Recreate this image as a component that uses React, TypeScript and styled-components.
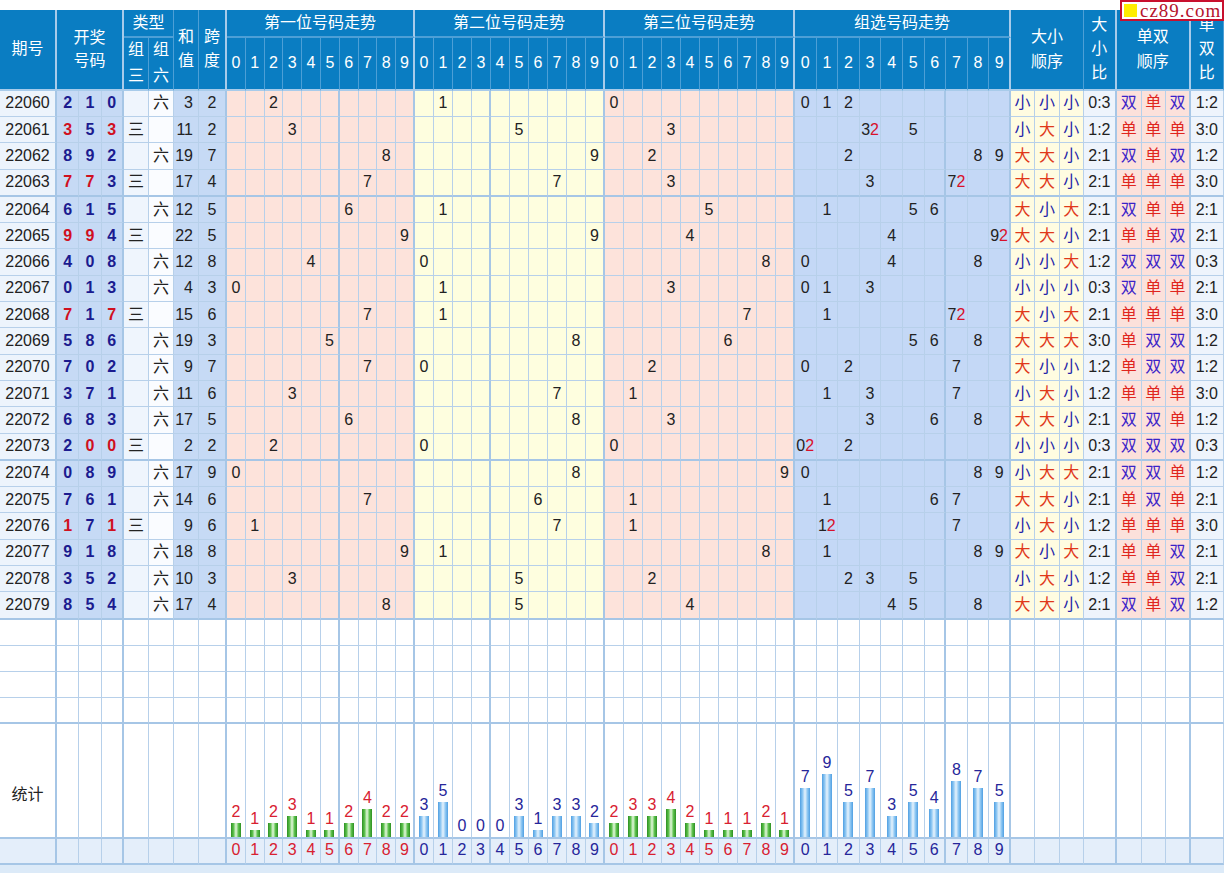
import React from 'react'
import styled, { createGlobalStyle } from 'styled-components'

const GlobalStyle = createGlobalStyle`
  html, body {
    margin: 0;
    padding: 0;
    background: #fff;
    overflow: hidden;
  }
  body {
    font-family: "Liberation Sans", "Noto Sans CJK SC", sans-serif;
    font-size: 16px;
    color: #222;
  }
`

const Page = styled.div`
  position: relative;
  width: 1224px;
  padding-top: 10px;
`

const Grid = styled.div<{ $cols: string; $rows: string }>`
  display: grid;
  grid-template-columns: ${p => p.$cols};
  grid-template-rows: ${p => p.$rows};
`

const Head = styled.div<{ $cs?: number; $rs?: number; $thick?: boolean; $top?: boolean; $lh?: number }>`
  box-sizing: border-box;
  grid-column: span ${p => p.$cs ?? 1};
  grid-row: span ${p => p.$rs ?? 1};
  background: #0a7dc2;
  color: #fff;
  display: flex;
  align-items: center;
  justify-content: center;
  text-align: center;
  font-size: 16px;
  line-height: ${p => p.$lh ?? 20}px;
  white-space: nowrap;
  border-right: ${p => (p.$thick ? '2px solid #a8cbea' : '1px solid #4d9fd6')};
  border-bottom: ${p => (p.$top ? '2px solid #4d9fd6' : '2px solid #a8cbea')};
`

const Cell = styled.div<{ $bg: string; $thick?: boolean; $bottom?: number }>`
  box-sizing: border-box;
  display: flex;
  align-items: center;
  justify-content: center;
  background: ${p => p.$bg};
  border-right: ${p => (p.$thick ? '2px solid #a6c6e6' : '1px solid #b7d0ea')};
  border-bottom: ${p => (p.$bottom === 2 ? '2px solid #a6c6e6' : '1px solid #b7d0ea')};
  font-size: 16px;
  line-height: 18px;
  color: #222;
  white-space: nowrap;
`

const SumCell = styled(Cell)`
  justify-content: flex-end;
  padding-right: 5px;
`

const StatCell = styled(Cell)`
  flex-direction: column;
  justify-content: flex-end;
`

const IssueStat = styled(Cell)`
  align-items: flex-end;
  padding-bottom: 33px;
`

const Ball = styled.span<{ $rep?: boolean }>`
  font-weight: bold;
  color: ${p => (p.$rep ? '#d0101f' : '#1b1b8f')};
`

const Red = styled.span`
  color: #d8102a;
`

const Word = styled.span<{ $hot: boolean }>`
  color: ${p => (p.$hot ? '#e0381a' : '#2424a8')};
`

const OddEven = styled.span<{ $odd: boolean }>`
  color: ${p => (p.$odd ? '#e0251e' : '#3b23c8')};
`

const Count = styled.span<{ $red: boolean }>`
  color: ${p => (p.$red ? '#d82030' : '#26269a')};
  margin-bottom: 2px;
`

const Bar = styled.div<{ $h: number; $green: boolean }>`
  width: 10px;
  height: ${p => p.$h}px;
  background: ${p =>
    p.$green
      ? 'linear-gradient(90deg, #2c8f22 0%, #5cc04c 25%, #e4f8dc 50%, #5cc04c 75%, #2c8f22 100%)'
      : 'linear-gradient(90deg, #4f9fe2 0%, #8cc6f2 25%, #e6f3fd 50%, #8cc6f2 75%, #4f9fe2 100%)'};
`

const Footer = styled.div`
  height: 20px;
  background: #dceaf8;
`

const Logo = styled.div`
  position: absolute;
  top: 0;
  right: 0;
  box-sizing: border-box;
  width: 104px;
  height: 21px;
  border: 2px solid #c8102e;
  background: #fff;
  display: flex;
  align-items: center;
  gap: 3px;
  padding-left: 2px;
  font-family: "Liberation Serif", serif;
  font-size: 19px;
  line-height: 19px;
  letter-spacing: 1px;
  color: #b5122b;
`

const LogoMark = styled.span`
  width: 13px;
  height: 13px;
  background: #ffee00;
  flex: none;
`

type Kind = 'issue' | 'num' | 'z3' | 'z6' | 'sum' | 'span' | 'p1' | 'p2' | 'p3' | 'grp' | 'ds' | 'dsr' | 'sd' | 'sdr'

interface Col {
  kind: Kind
  w: number
  d: number
  thick: boolean
}

// extra heavy grid lines seen inside the trend blocks
const heavyInside: Partial<Record<Kind, number>> = { p1: 5, p2: 3, grp: 6 }

const cols: Col[] = []
const add = (kind: Kind, w: number, n: number, thickLast = false) => {
  for (let i = 0; i < n; i++) {
    const thick = (thickLast && i === n - 1) || heavyInside[kind] === i
    cols.push({ kind, w, d: i, thick })
  }
}
add('issue', 57, 1, true)
add('num', 22.33, 3, true)
add('z3', 25, 1)
add('z6', 25, 1)
add('sum', 25, 1)
add('span', 28, 1, true)
add('p1', 18.8, 10, true)
add('p2', 19, 10, true)
add('p3', 19, 10, true)
add('grp', 21.6, 10, true)
add('ds', 24.33, 3)
add('dsr', 33, 1, true)
add('sd', 24.67, 3, true)
add('sdr', 33, 1)

const bgOf: Record<Kind, string> = {
  issue: '#edf4fc',
  num: '#c6daf5',
  z3: '#eff5fd',
  z6: '#fafcff',
  sum: '#c6daf5',
  span: '#c6daf5',
  p1: '#fde3db',
  p2: '#fefedf',
  p3: '#fde3db',
  grp: '#c4d8f6',
  ds: '#fffce1',
  dsr: '#eef4fc',
  sd: '#fce1db',
  sdr: '#eef4fc',
}

const raw = [
  ['22060', '210'], ['22061', '353'], ['22062', '892'], ['22063', '773'], ['22064', '615'],
  ['22065', '994'], ['22066', '408'], ['22067', '013'], ['22068', '717'], ['22069', '586'],
  ['22070', '702'], ['22071', '371'], ['22072', '683'], ['22073', '200'], ['22074', '089'],
  ['22075', '761'], ['22076', '171'], ['22077', '918'], ['22078', '352'], ['22079', '854'],
]

interface Draw {
  issue: string
  n: number[]
  pair: boolean
}

const draws: Draw[] = raw.map(([issue, s]) => {
  const n = s.split('').map(Number)
  const pair = n[0] === n[1] || n[1] === n[2] || n[0] === n[2]
  return { issue, n, pair }
})

// heavier line under every issue ending in 3, and under the last one
const heavyRow = (i: number) => draws[i].issue.endsWith('3') || i === draws.length - 1

const trendKinds: Kind[] = ['p1', 'p2', 'p3', 'grp']
const isTrend = (k: Kind) => trendKinds.includes(k)

const countFor = (k: Kind, d: number) => {
  if (k === 'grp') return draws.reduce((a, dr) => a + dr.n.filter(x => x === d).length, 0)
  const pos = k === 'p1' ? 0 : k === 'p2' ? 1 : 2
  return draws.filter(dr => dr.n[pos] === d).length
}

const redKind = (k: Kind) => k === 'p1' || k === 'p3'

const renderContent = (dr: Draw, c: Col): React.ReactNode => {
  const [a, b, z] = dr.n
  switch (c.kind) {
    case 'issue':
      return dr.issue
    case 'num': {
      const v = dr.n[c.d]
      const rep = dr.n.filter(x => x === v).length > 1
      return <Ball $rep={rep}>{v}</Ball>
    }
    case 'z3':
      return dr.pair ? '三' : ''
    case 'z6':
      return dr.pair ? '' : '六'
    case 'sum':
      return a + b + z
    case 'span':
      return Math.max(a, b, z) - Math.min(a, b, z)
    case 'p1':
      return a === c.d ? c.d : ''
    case 'p2':
      return b === c.d ? c.d : ''
    case 'p3':
      return z === c.d ? c.d : ''
    case 'grp': {
      const k = dr.n.filter(x => x === c.d).length
      if (k === 0) return ''
      if (k === 1) return c.d
      return (
        <>
          {c.d}
          <Red>{k}</Red>
        </>
      )
    }
    case 'ds': {
      const hot = dr.n[c.d] >= 5
      return <Word $hot={hot}>{hot ? '大' : '小'}</Word>
    }
    case 'dsr': {
      const big = dr.n.filter(x => x >= 5).length
      return `${big}:${3 - big}`
    }
    case 'sd': {
      const odd = dr.n[c.d] % 2 === 1
      return <OddEven $odd={odd}>{odd ? '单' : '双'}</OddEven>
    }
    case 'sdr': {
      const odd = dr.n.filter(x => x % 2 === 1).length
      return `${odd}:${3 - odd}`
    }
  }
  return ''
}

const digits = Array.from({ length: 10 }, (_, i) => i)

const rowHeights = [
  '28px',
  '52.7px',
  ...draws.map((_, i) => (heavyRow(i) ? '27.3px' : '26.3px')),
  '26px',
  '26px',
  '26px',
  '26.7px',
  '114.3px',
  '26.7px',
]

const App: React.FC = () => {
  const colTemplate = cols.map(c => `${c.w}px`).join(' ')

  return (
    <Page>
      <GlobalStyle />
      <Grid $cols={colTemplate} $rows={rowHeights.join(' ')}>
        <Head $rs={2} $thick>期号</Head>
        <Head $rs={2} $cs={3} $thick $lh={23}>开奖<br />号码</Head>
        <Head $cs={2} $top>类型</Head>
        <Head $rs={2} $lh={24}>和<br />值</Head>
        <Head $rs={2} $lh={24} $thick>跨<br />度</Head>
        <Head $cs={10} $top $thick>第一位号码走势</Head>
        <Head $cs={10} $top $thick>第二位号码走势</Head>
        <Head $cs={10} $top $thick>第三位号码走势</Head>
        <Head $cs={10} $top $thick>组选号码走势</Head>
        <Head $rs={2} $cs={3} $lh={25}>大小<br />顺序</Head>
        <Head $rs={2} $lh={24} $thick>大<br />小<br />比</Head>
        <Head $rs={2} $cs={3} $lh={25} $thick>单双<br />顺序</Head>
        <Head $rs={2} $lh={24}>单<br />双<br />比</Head>

        <Head $lh={26}>组<br />三</Head>
        <Head $lh={26}>组<br />六</Head>
        {trendKinds.map(k =>
          digits.map(d => (
            <Head key={`${k}${d}`} $thick={d === 9}>{d}</Head>
          ))
        )}

        {draws.map((dr, i) =>
          cols.map((c, j) => {
            const bottom = heavyRow(i) ? 2 : 1
            const Comp = c.kind === 'sum' ? SumCell : Cell
            return (
              <Comp key={`${dr.issue}-${j}`} $bg={bgOf[c.kind]} $thick={c.thick} $bottom={bottom}>
                {renderContent(dr, c)}
              </Comp>
            )
          })
        )}

        {[0, 1, 2, 3].map(r =>
          cols.map((c, j) => (
            <Cell key={`e${r}-${j}`} $bg="#fff" $thick={c.thick} $bottom={r === 3 ? 2 : 1} />
          ))
        )}

        {cols.map((c, j) => {
          if (c.kind === 'issue') {
            return (
              <IssueStat key={`s${j}`} $bg="#fff" $thick={c.thick} $bottom={2}>
                统计
              </IssueStat>
            )
          }
          if (!isTrend(c.kind)) {
            return <Cell key={`s${j}`} $bg="#fff" $thick={c.thick} $bottom={2} />
          }
          const n = countFor(c.kind, c.d)
          return (
            <StatCell key={`s${j}`} $bg="#fff" $thick={c.thick} $bottom={2}>
              <Count $red={redKind(c.kind)}>{n}</Count>
              <Bar $h={n * 7} $green={redKind(c.kind)} />
            </StatCell>
          )
        })}

        {cols.map((c, j) => (
          <Cell key={`l${j}`} $bg="#e4eefa" $thick={c.thick} $bottom={2}>
            {isTrend(c.kind) ? <Count $red={redKind(c.kind)}>{c.d}</Count> : null}
          </Cell>
        ))}
      </Grid>
      <Footer />
      <Logo>
        <LogoMark />
        cz89.com
      </Logo>
    </Page>
  )
}

export default App
